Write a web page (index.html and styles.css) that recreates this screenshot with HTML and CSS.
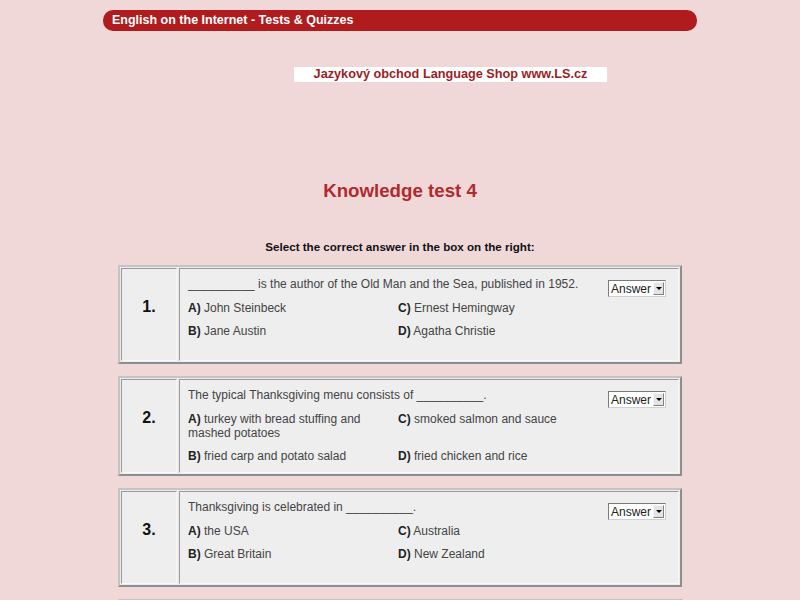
FILE: index.html
```html
<!DOCTYPE html>
<html>
<head>
<meta charset="utf-8">
<title>Knowledge test 4</title>
<link rel="stylesheet" href="styles.css">
</head>
<body>
<div class="page">
  <div class="topbar">English on the Internet - Tests &amp; Quizzes</div>
  <div class="shop-row"><div class="shop">Jazykový obchod Language Shop www.LS.cz</div></div>
  <h1 class="title">Knowledge test 4</h1>
  <p class="instr">Select the correct answer in the box on the right:</p>

  <div class="q first">
    <div class="num">1.</div>
    <div class="body">
      <div class="main">
        <div class="text">__________ is the author of the Old Man and the Sea, published in 1952.</div>
        <div class="opts">
          <div><b>A)</b> John Steinbeck</div>
          <div><b>C)</b> Ernest Hemingway</div>
          <div><b>B)</b> Jane Austin</div>
          <div><b>D)</b> Agatha Christie</div>
        </div>
      </div>
      <div class="side"><span class="answer">Answer<span class="arrow"></span></span></div>
    </div>
  </div>

  <div class="q">
    <div class="num">2.</div>
    <div class="body">
      <div class="main">
        <div class="text">The typical Thanksgiving menu consists of __________.</div>
        <div class="opts">
          <div><b>A)</b> turkey with bread stuffing and mashed potatoes</div>
          <div><b>C)</b> smoked salmon and sauce</div>
          <div><b>B)</b> fried carp and potato salad</div>
          <div><b>D)</b> fried chicken and rice</div>
        </div>
      </div>
      <div class="side"><span class="answer">Answer<span class="arrow"></span></span></div>
    </div>
  </div>

  <div class="q">
    <div class="num">3.</div>
    <div class="body">
      <div class="main">
        <div class="text">Thanksgiving is celebrated in __________.</div>
        <div class="opts">
          <div><b>A)</b> the USA</div>
          <div><b>C)</b> Australia</div>
          <div><b>B)</b> Great Britain</div>
          <div><b>D)</b> New Zealand</div>
        </div>
      </div>
      <div class="side"><span class="answer">Answer<span class="arrow"></span></span></div>
    </div>
  </div>

  <div class="q">
    <div class="num">4.</div>
    <div class="body">
      <div class="main">
        <div class="text">The Statue of Liberty was a gift from __________.</div>
        <div class="opts">
          <div><b>A)</b> France</div>
          <div><b>C)</b> Spain</div>
          <div><b>B)</b> Italy</div>
          <div><b>D)</b> Germany</div>
        </div>
      </div>
      <div class="side"><span class="answer">Answer<span class="arrow"></span></span></div>
    </div>
  </div>
</div>
</body>
</html>
```

FILE: styles.css
```css
html, body {
  margin: 0;
  padding: 0;
  background: #f0d8d9;
  font-family: "Liberation Sans", Arial, sans-serif;
}
.page {
  padding-top: 10px;
  display: flex;
  flex-direction: column;
  align-items: center;
}
.topbar {
  width: 594px;
  height: 21px;
  box-sizing: border-box;
  background: #b01b1d;
  border-radius: 10px;
  color: #fff;
  font-weight: bold;
  font-size: 12.5px;
  line-height: 21px;
  padding-left: 9px;
}
.shop-row {
  width: 800px;
  display: flex;
  justify-content: center;
  padding-left: 101px;
  box-sizing: border-box;
  margin-top: 36px;
}
.shop {
  width: 313px;
  height: 15px;
  background: #fff;
  color: #9e1c24;
  font-weight: bold;
  font-size: 12.7px;
  line-height: 15px;
  text-align: center;
}
.title {
  margin: 97px 0 0;
  font-size: 18.7px;
  line-height: 23px;
  color: #b12a2c;
  font-weight: bold;
}
.instr {
  margin: 38px 0 0;
  font-size: 11.6px;
  line-height: 14px;
  font-weight: bold;
  color: #111;
}
.q {
  margin-top: 12px;
  width: 564px;
  box-sizing: border-box;
  border: 2px solid;
  border-color: #c4c4c4 #8e8e8e #8e8e8e #c4c4c4;
  background: #ececec;
  padding: 1px;
  display: flex;
  gap: 2px;
  min-height: 99px;
}
.q.first { margin-top: 11px; }
.num {
  width: 56px;
  box-sizing: border-box;
  border: 1px solid;
  border-color: #9a9a9a #f8f8f8 #f8f8f8 #9a9a9a;
  background: #eeeeee;
  display: flex;
  align-items: center;
  justify-content: center;
  font-weight: bold;
  font-size: 16px;
  padding-bottom: 16px;
  color: #111;
}
.body {
  flex: 1;
  box-sizing: border-box;
  border: 1px solid;
  border-color: #9a9a9a #f8f8f8 #f8f8f8 #9a9a9a;
  background: #eeeeee;
  padding: 8px 12px 9px 8px;
  display: flex;
  font-size: 12px;
  line-height: 14px;
  color: #444;
}
.main { flex: 1; }
.text { margin-bottom: 10px; }
.opts {
  display: grid;
  grid-template-columns: 210px 1fr;
  row-gap: 9px;
}
.opts b { color: #222; }
.side { padding-top: 3px; }
.answer {
  display: flex;
  align-items: center;
  width: 58px;
  height: 17px;
  box-sizing: border-box;
  border: 1px solid;
  border-color: #7a7a7a #d0d0d0 #d0d0d0 #7a7a7a;
  background: #fff;
  color: #222;
  font-size: 12px;
  padding-left: 2px;
  justify-content: space-between;
}
.arrow {
  width: 11px;
  height: 13px;
  margin-right: 1px;
  box-sizing: border-box;
  border: 1px solid;
  border-color: #f4f4f4 #808080 #808080 #f4f4f4;
  background: #e4e4e4;
  display: flex;
  align-items: center;
  justify-content: center;
}
.arrow::after {
  content: "";
  border-left: 3px solid transparent;
  border-right: 3px solid transparent;
  border-top: 3px solid #000;
}
```
